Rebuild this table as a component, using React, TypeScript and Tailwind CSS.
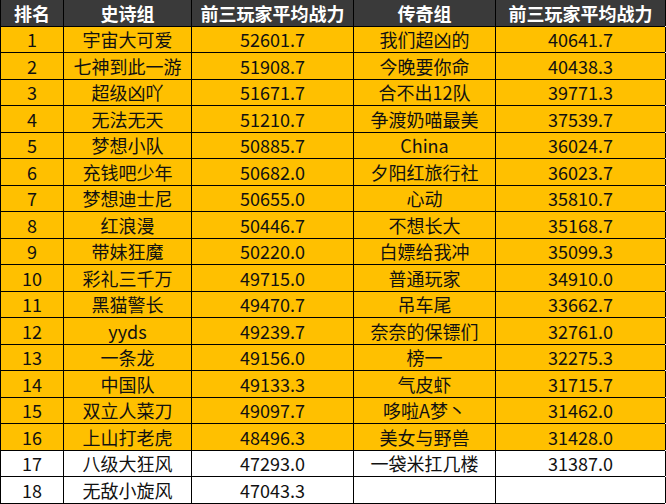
const epic: [string, string][] = [
  ["宇宙大可爱", "52601.7"],
  ["七神到此一游", "51908.7"],
  ["超级凶吖", "51671.7"],
  ["无法无天", "51210.7"],
  ["梦想小队", "50885.7"],
  ["充钱吧少年", "50682.0"],
  ["梦想迪士尼", "50655.0"],
  ["红浪漫", "50446.7"],
  ["带妹狂魔", "50220.0"],
  ["彩礼三千万", "49715.0"],
  ["黑猫警长", "49470.7"],
  ["yyds", "49239.7"],
  ["一条龙", "49156.0"],
  ["中国队", "49133.3"],
  ["双立人菜刀", "49097.7"],
  ["上山打老虎", "48496.3"],
  ["八级大狂风", "47293.0"],
  ["无敌小旋风", "47043.3"],
];

const legend: [string, string][] = [
  ["我们超凶的", "40641.7"],
  ["今晚要你命", "40438.3"],
  ["合不出12队", "39771.3"],
  ["争渡奶喵最美", "37539.7"],
  ["China", "36024.7"],
  ["夕阳红旅行社", "36023.7"],
  ["心动", "35810.7"],
  ["不想长大", "35168.7"],
  ["白嫖给我冲", "35099.3"],
  ["普通玩家", "34910.0"],
  ["吊车尾", "33662.7"],
  ["奈奈的保镖们", "32761.0"],
  ["榜一", "32275.3"],
  ["气皮虾", "31715.7"],
  ["哆啦A梦丶", "31462.0"],
  ["美女与野兽", "31428.0"],
  ["一袋米扛几楼", "31387.0"],
  ["", ""],
];

const cols = "grid grid-cols-[63px_128px_162px_142px_170px]";
const cell = "flex items-center justify-center border-r border-black";

export default function App() {
  return (
    <div
      className="w-[666px] h-[504px] bg-white text-[18px] leading-none text-[#111]"
      style={{ fontFamily: '"Noto Sans CJK SC", "Noto Sans", sans-serif' }}
    >
      <div className="w-[665px] border-l border-black">
        <div className={`${cols} h-[26.5px] bg-[#3a3a3a] text-white font-bold border-b border-black`}>
          <div className={cell}>排名</div>
          <div className={cell}>史诗组</div>
          <div className={cell}>前三玩家平均战力</div>
          <div className={cell}>传奇组</div>
          <div className={cell}>前三玩家平均战力</div>
        </div>
        {epic.map((e, i) => {
          const l = legend[i];
          const yellow = i < 16;
          return (
            <div
              key={i}
              className={`${cols} h-[26.5px] border-b border-black ${yellow ? "bg-[#ffc000]" : "bg-white"}`}
            >
              <div className={cell}>{i + 1}</div>
              <div className={cell}>{e[0]}</div>
              <div className={cell}>{e[1]}</div>
              <div className={cell}>{l[0]}</div>
              <div className={cell}>{l[1]}</div>
            </div>
          );
        })}
      </div>
    </div>
  );
}
